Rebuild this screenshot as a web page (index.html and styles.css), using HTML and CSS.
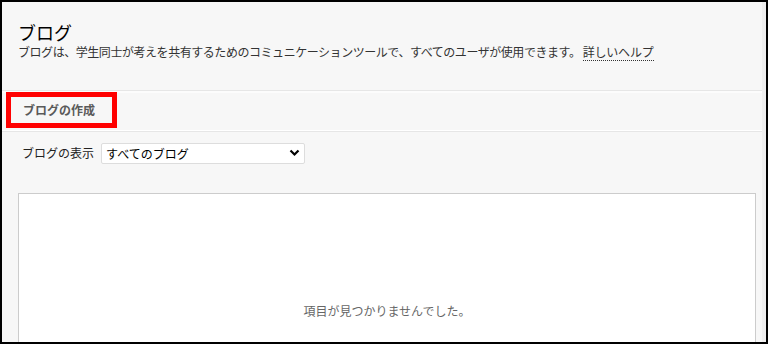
FILE: index.html
```html
<!DOCTYPE html>
<html lang="ja">
<head>
<meta charset="UTF-8">
<title>ブログ</title>
<meta name="viewport" content="width=device-width,initial-scale=1">
<link rel="stylesheet" href="styles.css">
</head>
<body>
<div class="frame">
  <div class="page">

    <!-- page header -->
    <div class="pagehead">
      <h1>ブログ</h1>
      <p class="desc">ブログは、学生同士が考えを共有するためのコミュニケーションツールで、すべてのユーザが使用できます。 <a href="#" class="help">詳しいヘルプ</a></p>
    </div>

    <!-- action bar -->
    <div class="actions">
      <a href="#" class="btn mark">ブログの作成</a>
    </div>

    <!-- filter -->
    <div class="filter">
      <label for="view">ブログの表示</label>
      <div class="selwrap">
        <select id="view">
          <option>すべてのブログ</option>
          <option>自分のブログ</option>
        </select>
        <svg class="chev" width="11" height="8" viewBox="0 0 11 8"><path d="M1.5 1.5 5.5 5.5 9.5 1.5" fill="none" stroke="#000" stroke-width="2.2"/></svg>
      </div>
    </div>

    <!-- list -->
    <div class="list">
      <div class="empty">項目が見つかりませんでした。</div>
    </div>

  </div>
</div>
</body>
</html>
```

FILE: styles.css
```css
body{margin:0;background:#fff;font-family:"Noto Sans CJK JP","Noto Sans",sans-serif}
.frame{width:768px;height:344px;box-sizing:border-box;border:2px solid #000;overflow:hidden}
.page{height:100%;background:#f7f7f7;border-right:4px solid #efefef;box-sizing:border-box}
/* header */
.pagehead{padding:18px 0 0 16px;margin-bottom:30px}
.pagehead h1{margin:0;font-size:18px;line-height:24px;font-weight:normal;color:#000}
.desc{margin:0;font-size:12px;line-height:16px;color:#333;letter-spacing:-.45px}
.help{color:#333;text-decoration:none;border-bottom:1px dotted #333;letter-spacing:-.2px}
/* action bar */
.actions{border-top:1px solid #e6e6e6;border-bottom:1px solid #e6e6e6;
         box-shadow:inset 0 2px 0 #fcfcfc,inset 0 -1px 0 #fff;padding:1px 0 3px 4px}
.btn{display:block;width:89px;height:26px;line-height:26px;padding-left:12px;
     font-size:12px;font-weight:bold;color:#5a5a5a;text-decoration:none}
.mark{border:5px solid #f00}
/* filter */
.filter{display:flex;align-items:center;gap:7px;padding:8px 0 0 20px}
.filter label{font-size:12px;color:#222}
.selwrap{position:relative}
.selwrap select{appearance:none;-webkit-appearance:none;width:204px;height:21px;
     border:1px solid #ddd;border-radius:2px;background:#fff;padding:0 0 0 4px;
     font-family:inherit;font-size:12px;color:#000}
.chev{position:absolute;right:5px;top:9px;pointer-events:none}
/* list */
.list{margin:29px 6px 0 16px;height:200px;background:#fff;border:1px solid #ccc}
.empty{padding-top:108px;text-align:center;font-size:12px;color:#666}
```
